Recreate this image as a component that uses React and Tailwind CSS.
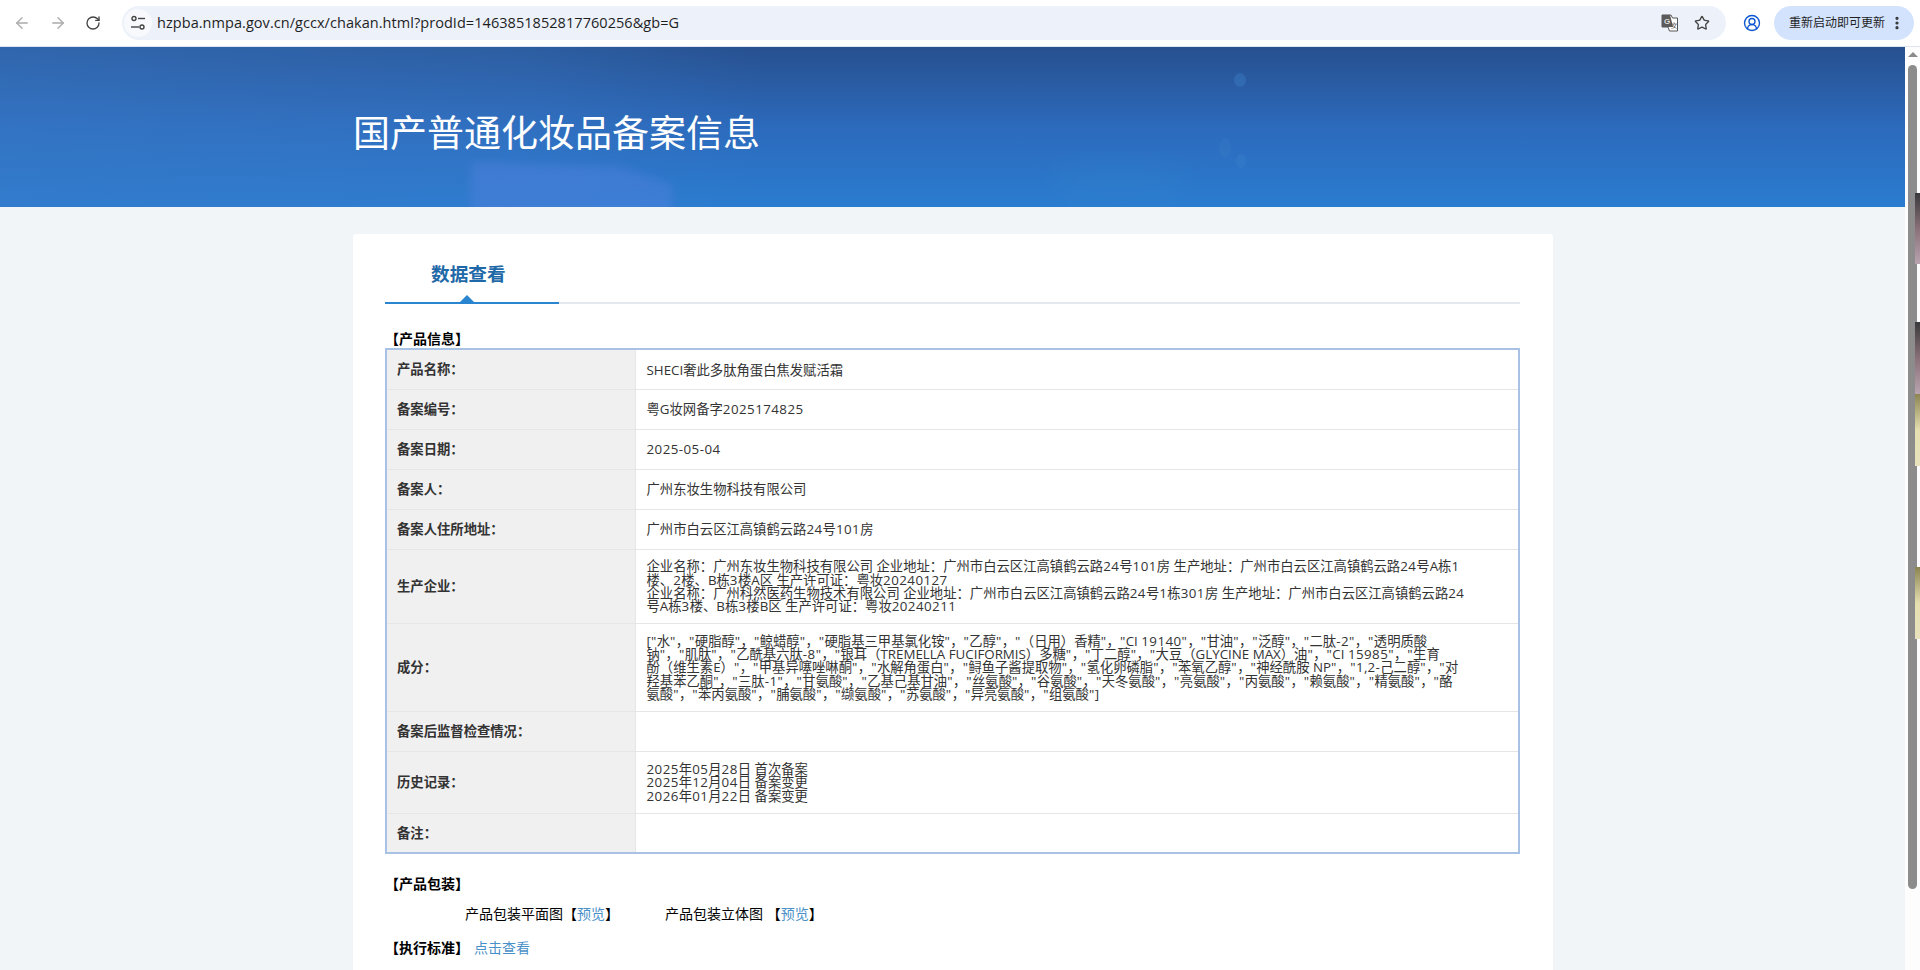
import React from "react";
import { ArrowLeft, ArrowRight, RotateCw, Star, CircleUserRound, EllipsisVertical } from "lucide-react";

const FONT = "font-['Open_Sans','Noto_Sans_CJK_SC',sans-serif]";

function Tune() {
  return (
    <svg width="16" height="16" viewBox="0 0 16 16" fill="none" stroke="#444" strokeWidth="1.4">
      <circle cx="4" cy="3.5" r="2" />
      <path d="M8 3.5h7" />
      <circle cx="12" cy="12" r="2" />
      <path d="M1 12h8" />
    </svg>
  );
}

function Translate() {
  return (
    <svg width="18" height="18" viewBox="0 0 18 18">
      <path d="M1 1h9l1.500 3H16.500v13H8.500L7 13H1z" fill="#fff" stroke="#555" strokeWidth="1" />
      <path d="M1 1h8l3.200 12H1z" fill="#5a5a5a" />
      <text x="6" y="10" fontSize="8" fontWeight="700" fill="#ddd" textAnchor="middle" fontFamily="Liberation Sans">G</text>
      <text x="13.200" y="13.500" fontSize="7" fill="#444" textAnchor="middle" fontFamily="Liberation Sans">文</text>
    </svg>
  );
}

function Toolbar() {
  return (
    <div className="h-[47px] shrink-0 flex items-center bg-white border-b border-[#dfe4f2] pb-px">
      <div className="w-[122px] shrink-0 flex items-center pl-[13px] gap-[18px]">
        <ArrowLeft size={18} strokeWidth={1.7} color="#aaaaaa" />
        <ArrowRight size={18} strokeWidth={1.7} color="#aaaaaa" />
        <RotateCw size={16} strokeWidth={2} color="#444" />
      </div>
      <div className="w-[1604px] h-[34px] shrink-0 rounded-full bg-[#edf2fa] flex items-center">
        <div className="w-[28px] h-[28px] ml-[2px] rounded-full bg-[#f8f9fd] flex items-center justify-center shrink-0">
          <Tune />
        </div>
        <span className="ml-[5px] text-[14.5px] tracking-[0.05px] text-[#1f1f1f] font-['Open_Sans',sans-serif] flex-1 whitespace-nowrap">
          hzpba.nmpa.gov.cn/gccx/chakan.html?prodId=1463851852817760256&amp;gb=G
        </span>
        <div className="mr-[15px]"><Translate /></div>
        <div className="mr-[16px]"><Star size={16} strokeWidth={2} color="#444" /></div>
      </div>
      <div className="w-[48px] shrink-0 flex justify-center pl-[4px]">
        <CircleUserRound size={18} strokeWidth={1.8} color="#0b57d0" />
      </div>
      <div className="w-[140px] h-[34px] shrink-0 rounded-full bg-[#d3e3fd] flex items-center pl-[15px]">
        <span className={`text-[12px] text-[#1f1f1f] whitespace-nowrap ${FONT}`}>重新启动即可更新</span>
        <EllipsisVertical size={16} strokeWidth={2.8} color="#333" className="ml-[4px]" />
      </div>
      <div className="flex-1" />
    </div>
  );
}

function Hero() {
  return (
    <div className="relative h-[160px] shrink-0 overflow-hidden bg-gradient-to-b from-[#27508f] via-[#2c6abc] to-[#2a7cd0]">
      <svg className="absolute inset-0" width="1905" height="160" viewBox="0 0 1905 160">
        <defs>
          <filter id="soft"><feGaussianBlur stdDeviation="14" /></filter>
          <filter id="soft2"><feGaussianBlur stdDeviation="5" /></filter>
          <linearGradient id="left" x1="0" y1="0" x2="1" y2="0">
            <stop offset="0" stopColor="#3a7cca" stopOpacity="0.5" />
            <stop offset="0.7" stopColor="#3a7cca" stopOpacity="0.3" />
            <stop offset="1" stopColor="#3a7cca" stopOpacity="0" />
          </linearGradient>
        </defs>
        <rect x="0" y="0" width="760" height="160" fill="url(#left)" />
        <path d="M471 115L620 120L672 138V170H471Z" fill="#4f80dc" opacity="0.5" filter="url(#soft2)" />
        <ellipse cx="1240" cy="33" rx="6" ry="7" fill="#3a7cc0" opacity="0.45" />
        <ellipse cx="1225" cy="101" rx="6" ry="10" fill="#3a80c8" opacity="0.25" />
        <ellipse cx="1241" cy="114" rx="5" ry="7" fill="#3a88cc" opacity="0.3" />
        <ellipse cx="1120" cy="135" rx="70" ry="25" fill="#3a8ccc" opacity="0.15" filter="url(#soft)" />
      </svg>
      <div className="relative w-[1200px] ml-[353px] pt-[64px]">
        <h1 className={`text-[37px] leading-[44px] font-normal text-white whitespace-nowrap ${FONT}`}>
          国产普通化妆品备案信息
        </h1>
      </div>
    </div>
  );
}

const rows = [
  { label: "产品名称：", h: "h-[40px]", value: ["SHECI奢此多肽角蛋白焦发赋活霜"] },
  { label: "备案编号：", h: "h-[40px]", value: ["粤G妆网备字2025174825"] },
  { label: "备案日期：", h: "h-[40px]", value: ["2025-05-04"] },
  { label: "备案人：", h: "h-[40px]", value: ["广州东妆生物科技有限公司"] },
  { label: "备案人住所地址：", h: "h-[40px]", value: ["广州市白云区江高镇鹤云路24号101房"] },
  {
    label: "生产企业：",
    h: "h-[74px]",
    value: [
      "企业名称：广州东妆生物科技有限公司 企业地址：广州市白云区江高镇鹤云路24号101房 生产地址：广州市白云区江高镇鹤云路24号A栋1",
      "楼、2楼、B栋3楼A区 生产许可证：粤妆20240127",
      "企业名称：广州科然医药生物技术有限公司 企业地址：广州市白云区江高镇鹤云路24号1栋301房 生产地址：广州市白云区江高镇鹤云路24",
      "号A栋3楼、B栋3楼B区 生产许可证：粤妆20240211",
    ],
  },
  {
    label: "成分：",
    h: "h-[88px]",
    value: [
      '["水"，"硬脂醇"，"鲸蜡醇"，"硬脂基三甲基氯化铵"，"乙醇"，"（日用）香精"，"CI 19140"，"甘油"，"泛醇"，"二肽-2"，"透明质酸',
      '钠"，"肌肽"，"乙酰基六肽-8"，"银耳（TREMELLA FUCIFORMIS）多糖"，"丁二醇"，"大豆（GLYCINE MAX）油"，"CI 15985"，"生育',
      '酚（维生素E）"，"甲基异噻唑啉酮"，"水解角蛋白"，"鲟鱼子酱提取物"，"氢化卵磷脂"，"苯氧乙醇"，"神经酰胺 NP"，"1,2-己二醇"，"对',
      '羟基苯乙酮"，"三肽-1"，"甘氨酸"，"乙基己基甘油"，"丝氨酸"，"谷氨酸"，"天冬氨酸"，"亮氨酸"，"丙氨酸"，"赖氨酸"，"精氨酸"，"酪',
      '氨酸"，"苯丙氨酸"，"脯氨酸"，"缬氨酸"，"苏氨酸"，"异亮氨酸"，"组氨酸"]',
    ],
  },
  { label: "备案后监督检查情况：", h: "h-[40px]", value: [] },
  {
    label: "历史记录：",
    h: "h-[62px]",
    value: ["2025年05月28日 首次备案", "2025年12月04日 备案变更", "2026年01月22日 备案变更"],
  },
  { label: "备注：", h: "h-[40px]", value: [] },
];

function Line({ text }) {
  return (
    <div>
      {text.split(/([0-9"\-]+)/).map((part, i) =>
        i % 2 === 1 ? (
          <span key={i} className="tracking-[0.45px]">{part}</span>
        ) : (
          <span key={i}>{part}</span>
        )
      )}
    </div>
  );
}

function InfoTable() {
  return (
    <table className="w-[1135px] table-fixed border-collapse border-2 border-[#a8c2e6]">
      <colgroup>
        <col className="w-[249px]" />
        <col />
      </colgroup>
      <tbody>
        {rows.map((r) => (
          <tr key={r.label} className={r.h}>
            <td className="bg-[#f0f0f0] border border-[#e6e6e6] pl-[10px] pt-[2px] font-bold text-[#333] whitespace-nowrap">
              {r.label}
            </td>
            <td className="border border-[#e6e6e6] pl-[11px] pt-[2px] text-[#333] whitespace-nowrap leading-[13.33px]">
              {r.value.map((line) => (
                <Line key={line} text={line} />
              ))}
            </td>
          </tr>
        ))}
      </tbody>
    </table>
  );
}

function Card() {
  return (
    <div className={`w-[1200px] ml-[353px] mt-[27px] bg-white rounded-[3px] pl-[32px] pr-[33px] text-[13.33px] ${FONT}`}>
      <div className="relative h-[70px] border-b-2 border-[#e5e8ec]">
        <div className="absolute left-0 bottom-[-2px] w-[174px] h-[2px] bg-[#2a85d0]" />
        <div className="absolute left-[75px] bottom-0 w-0 h-0 border-x-[7px] border-x-transparent border-b-[7px] border-b-[#2a85d0]" />
        <div className="pl-[46px] pt-[28px] text-[18.67px] leading-[24px] font-bold text-[#1f69a8]">数据查看</div>
      </div>
      <div className="mt-[26px] h-[18px] text-[14px] leading-[18px] font-bold text-black">【产品信息】</div>
      <InfoTable />
      <div className="mt-[21px] text-[14px] leading-[18px] font-bold text-black">【产品包装】</div>
      <div className="mt-[12px] text-[14px] leading-[18px] text-black flex pl-[80px]">
        <span className="w-[200px]">产品包装平面图【<a className="text-[#4a90c8]">预览</a>】</span>
        <span>产品包装立体图 【<a className="text-[#4a90c8]">预览</a>】</span>
      </div>
      <div className="mt-[16px] text-[14px] leading-[18px] text-black flex">
        <span className="font-bold">【执行标准】</span>
        <a className="ml-[5px] text-[#4a90c8]">点击查看</a>
      </div>
      <div className="h-[200px]" />
    </div>
  );
}

function Scrollbar() {
  return (
    <div className="relative w-[15px] shrink-0 bg-[#fdfdfd] h-full">
      <div className="absolute left-[3px] top-[5px] w-0 h-0 border-x-[5px] border-x-transparent border-b-[5px] border-b-[#8c8c8c]" />
      <div className="absolute left-[3px] top-[18px] w-[9px] h-[824px] rounded-full bg-[#8c8c8c]" />
      <div className="absolute right-0 top-[146px] w-[5px] h-[71px] bg-gradient-to-b from-[#3a3a3c] via-[#8a7078] to-[#b9a4b0]" />
      <div className="absolute right-0 top-[275px] w-[5px] h-[72px] bg-gradient-to-b from-[#3a3a3c] via-[#8a7078] to-[#b9a4b0]" />
      <div className="absolute right-0 top-[347px] w-[5px] h-[72px] bg-gradient-to-b from-[#8c8552] via-[#e5dfb0] to-[#e8e3bd]" />
      <div className="absolute right-0 top-[520px] w-[5px] h-[72px] bg-gradient-to-b from-[#8c8552] via-[#e5dfb0] to-[#e8e3bd]" />
    </div>
  );
}

export default function App() {
  return (
    <div className="h-[970px] overflow-hidden flex flex-col bg-white">
      <Toolbar />
      <div className="flex-1 flex min-h-0">
        <div className="w-[1905px] shrink-0 overflow-hidden bg-[#f1f5f8]">
          <Hero />
          <Card />
        </div>
        <Scrollbar />
      </div>
    </div>
  );
}
